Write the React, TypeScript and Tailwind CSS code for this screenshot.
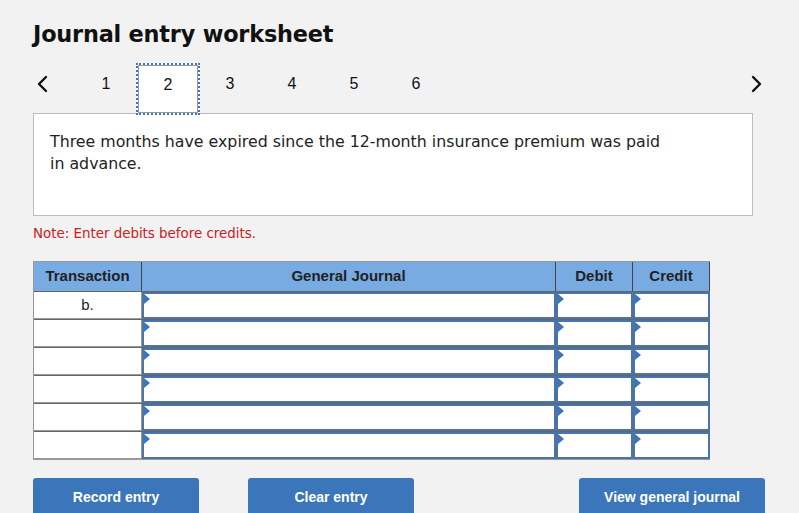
import React from "react";

const Chevron = ({ dir }: { dir: "left" | "right" }) => (
  <svg width="12" height="18" viewBox="0 0 12 18" fill="none">
    {dir === "left" ? (
      <path d="M10 2 L3 9 L10 16" stroke="#111" strokeWidth="2.4" strokeLinecap="round" strokeLinejoin="round" />
    ) : (
      <path d="M2 2 L9 9 L2 16" stroke="#111" strokeWidth="2.4" strokeLinecap="round" strokeLinejoin="round" />
    )}
  </svg>
);

const InputCell = ({ w }: { w: string }) => (
  <div className={`${w} relative h-full border-2 border-[#4a73a8] bg-white`}>
    <div className="absolute left-0 top-0 h-0 w-0 border-y-[5px] border-l-[6px] border-y-transparent border-l-[#3a76b9]" />
  </div>
);

export default function App() {
  const rows = ["b.", "", "", "", "", ""];
  return (
    <div className="min-h-[513px] w-[799px] overflow-hidden bg-[#f2f2f2] pl-[33px] font-['DejaVu_Sans',Verdana,sans-serif] text-[#111]">
      <h1 className="pt-[20px] text-[22.4px] font-bold leading-[28px] tracking-[-0.2px] text-[#111]">Journal entry worksheet</h1>

      <div className="mt-[15px] flex h-[50px] w-[730px] items-start">
        <div className="flex h-[42px] w-[42px] items-center pl-[3px]">
          <Chevron dir="left" />
        </div>
        {[1, 2, 3, 4, 5, 6].map((n) =>
          n === 2 ? (
            <div
              key={n}
              className="relative z-10 -mx-[1px] flex h-[52px] w-[64px] items-start justify-center border-2 border-dotted border-[#3a76b9] bg-white pt-[8px] outline outline-1 -outline-offset-3 outline-[#999] font-['Liberation_Sans',Arial,sans-serif] text-[16px]"
            >
              {n}
            </div>
          ) : (
            <div key={n} className="flex h-[41px] w-[62px] items-center justify-center font-['Liberation_Sans',Arial,sans-serif] text-[16px]">
              {n}
            </div>
          )
        )}
        <div className="flex-1" />
        <div className="flex h-[42px] w-[12px] items-center">
          <Chevron dir="right" />
        </div>
      </div>

      <div className="h-[103px] w-[720px] border border-[#bdbdbd] bg-white pl-[16px] pt-[17px] text-[15.8px] leading-[22px] text-[#222]">
        <div className="whitespace-nowrap">Three months have expired since the 12-month insurance premium was paid</div>
        <div>in advance.</div>
      </div>

      <div className="mt-[9px] text-[13.4px] leading-[18px] text-[#c8201e]">Note: Enter debits before credits.</div>

      <div className="mt-[18px] w-[677px] border-l border-t border-b border-[#999] font-['Liberation_Sans',Arial,sans-serif]">
        <div className="flex h-[29px] bg-[#78abe2] text-[15px] font-bold text-[#222]">
          <div className="flex w-[108px] items-center justify-center border-r border-[#444]">Transaction</div>
          <div className="flex w-[414px] items-center justify-center border-r border-[#444]">General Journal</div>
          <div className="flex w-[77px] items-center justify-center border-r border-[#444]">Debit</div>
          <div className="flex w-[77px] items-center justify-center border-r border-[#444]">Credit</div>
        </div>
        {rows.map((t, i) => (
          <div key={i} className="flex h-[28px] border-t border-[#666]">
            <div className="flex w-[108px] items-center justify-center border-r border-b border-[#999] bg-white text-[15px] text-[#222]">
              {t}
            </div>
            <InputCell w="w-[414px]" />
            <InputCell w="w-[77px]" />
            <InputCell w="w-[77px]" />
          </div>
        ))}
      </div>

      <div className="mt-[18px] flex w-[732px] font-['Liberation_Sans',Arial,sans-serif] text-[14px] font-bold text-white">
        <div className="flex h-[40px] w-[166px] items-start justify-center rounded-t-[3px] bg-[#3a76b9] pt-[9px]">Record entry</div>
        <div className="ml-[49px] flex h-[40px] w-[166px] items-start justify-center rounded-t-[3px] bg-[#3a76b9] pt-[9px]">Clear entry</div>
        <div className="flex-1" />
        <div className="flex h-[40px] w-[186px] items-start justify-center rounded-t-[3px] bg-[#3a76b9] pt-[9px]">View general journal</div>
      </div>
    </div>
  );
}
